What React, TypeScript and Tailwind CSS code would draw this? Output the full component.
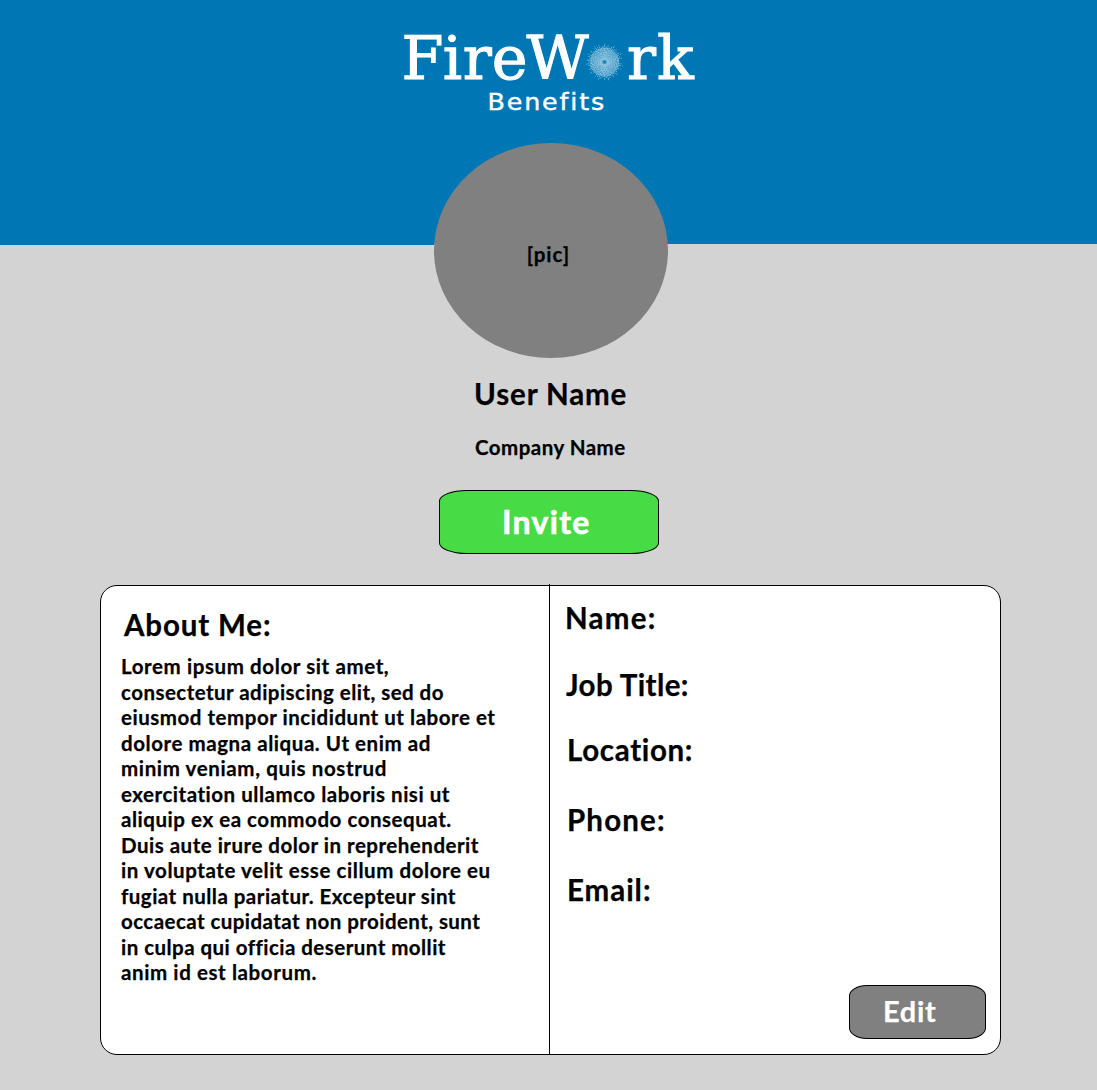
const aboutLines = [
  { text: 'Lorem ipsum dolor sit amet,', tracking: 'tracking-[0.6px]' },
  { text: 'consectetur adipiscing elit, sed do', tracking: 'tracking-[0.46px]' },
  { text: 'eiusmod tempor incididunt ut labore et', tracking: 'tracking-[0.53px]' },
  { text: 'dolore magna aliqua. Ut enim ad', tracking: 'tracking-[0.56px]' },
  { text: 'minim veniam, quis nostrud', tracking: 'tracking-[0.63px]' },
  { text: 'exercitation ullamco laboris nisi ut', tracking: 'tracking-[0.52px]' },
  { text: 'aliquip ex ea commodo consequat.', tracking: 'tracking-[0.54px]' },
  { text: 'Duis aute irure dolor in reprehenderit', tracking: 'tracking-[0.5px]' },
  { text: 'in voluptate velit esse cillum dolore eu', tracking: 'tracking-[0.57px]' },
  { text: 'fugiat nulla pariatur. Excepteur sint', tracking: 'tracking-[0.48px]' },
  { text: 'occaecat cupidatat non proident, sunt', tracking: 'tracking-[0.44px]' },
  { text: 'in culpa qui officia deserunt mollit', tracking: 'tracking-[0.46px]' },
  { text: 'anim id est laborum.', tracking: 'tracking-[0.6px]' },
];

const fields = [
  { label: 'Name:', style: 'h-[67px] ml-[15px] tracking-[1.25px]' },
  { label: 'Job Title:', style: 'h-[65px] ml-[16px] tracking-[0.39px]' },
  { label: 'Location:', style: 'h-[70px] ml-[17px] tracking-[0.66px]' },
  { label: 'Phone:', style: 'h-[70px] ml-[17px] tracking-[1.15px]' },
  { label: 'Email:', style: 'h-[70px] ml-[17px] tracking-[0.95px]' },
];

const rays = Array.from({ length: 56 }, (_, i) => {
  const angle = (i / 56) * Math.PI * 2;
  const outer = 15.5 + ((i * 7) % 5) * 0.8;
  return {
    x1: 604.5 + Math.cos(angle) * 2.5,
    y1: 62 + Math.sin(angle) * 2.5,
    x2: 604.5 + Math.cos(angle) * outer,
    y2: 62 + Math.sin(angle) * outer,
    offset: (i * 13) % 11,
  };
});

function Logo() {
  return (
    <svg width="301" height="100" viewBox="398 20 301 100" className="mx-auto block font-normal" role="img" aria-label="FireWork Benefits">
      <g fill="#fff" stroke="#fff" strokeWidth="1.1" fontFamily="'DejaVu Serif', serif" fontSize="60.5">
        <text x="401.5 442.7 462.7 491.7 526.5" y="79">FireW</text>
        <text x="627 657" y="79">rk</text>
      </g>
      <circle cx="604.5" cy="62" r="14.5" fill="#fff" opacity="0.25" />
      <g stroke="#d5e8f3" strokeWidth="0.85" opacity="0.6">
        {rays.map((r, i) => (
          <line key={i} x1={r.x1} y1={r.y1} x2={r.x2} y2={r.y2} strokeDasharray="2.4 1 1.5 0.7 3 1.2" strokeDashoffset={r.offset} />
        ))}
      </g>
      <circle cx="604.5" cy="62" r="1.1" fill="#0077b5" />
      <text transform="translate(487.5 110) scale(1.13 1)" fill="#fff" fontFamily="'DejaVu Sans', sans-serif" fontSize="22.5" letterSpacing="1.6" stroke="#fff" strokeWidth="0.4">
        Benefits
      </text>
    </svg>
  );
}

export default function App() {
  return (
    <div className="h-[1090px] w-[1097px] overflow-hidden bg-[#d3d3d3] font-[Lato,sans-serif] font-bold text-black [-webkit-text-stroke:0.25px]">
      <header className="h-[244px] bg-[#0077b5] pt-5">
        <Logo />
        <div className="mt-[23px] ml-[434px] flex h-[215px] w-[234px] justify-center rounded-[50%] bg-[#808080] pt-[96px] pr-[5px] text-[20.5px] leading-[30px] tracking-[1px]">
          [pic]
        </div>
      </header>
      <div className="h-px w-[434px] bg-[#0077b5]" />

      <main>
        <h1 className="mt-[129px] ml-[474px] text-[29.5px] leading-[40px] tracking-[0.88px]">User Name</h1>
        <h2 className="mt-[18px] ml-[475px] text-[20.5px] leading-[30px] tracking-[0.47px]">Company Name</h2>
        <button className="mt-[28px] ml-[439px] block h-[64px] w-[220px] rounded-[28px/11px] border border-black bg-[#47db45] pl-[62px] text-left text-[32px] leading-[58px] tracking-[1.3px] text-white">
          <span className="[-webkit-text-stroke:0.6px]">Invite</span>
        </button>

        <section className="mt-[31px] ml-[100px] flex h-[470px] w-[901px] rounded-[17px] border border-black bg-white">
          <div className="w-[448px] pt-[19px] pl-5">
            <h3 className="ml-[3px] text-[29.5px] leading-[40px] tracking-[0.85px]">About Me:</h3>
            <div className="mt-[9px] text-[20.5px] leading-[25.5px] whitespace-nowrap">
              {aboutLines.map((line) => (
                <p key={line.text} className={line.tracking}>{line.text}</p>
              ))}
            </div>
          </div>
          <div className="-mt-[2px] w-px bg-black" />
          <div className="flex flex-1 flex-col pt-[12px]">
            {fields.map((field) => (
              <div key={field.label} className={`text-[29.5px] leading-[40px] ${field.style}`}>
                {field.label}
              </div>
            ))}
            <button className="mt-[45px] mr-[14px] flex h-[54px] w-[137px] items-start self-end rounded-[18px/11px] border border-black bg-[#808080] pt-px pl-[33px] text-[29px] leading-[48px] tracking-[0.68px] text-white">
              Edit
            </button>
          </div>
        </section>
      </main>
    </div>
  );
}
